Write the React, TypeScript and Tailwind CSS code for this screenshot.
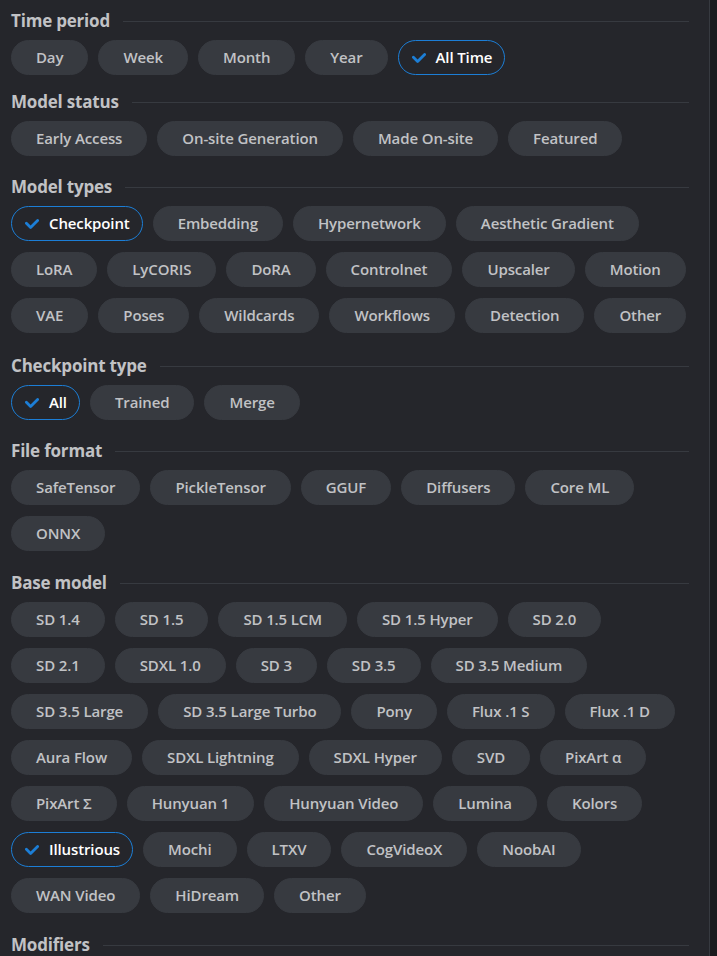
import React from "react";

type Opt = { label: string; checked?: boolean };

const sections: { title: string; options: Opt[]; mb: string }[] = [
  {
    title: "Time period",
    mb: "mb-[15px]",
    options: [
      { label: "Day" },
      { label: "Week" },
      { label: "Month" },
      { label: "Year" },
      { label: "All Time", checked: true },
    ],
  },
  {
    title: "Model status",
    mb: "mb-[19px]",
    options: [
      { label: "Early Access" },
      { label: "On-site Generation" },
      { label: "Made On-site" },
      { label: "Featured" },
    ],
  },
  {
    title: "Model types",
    mb: "mb-[21px]",
    options: [
      { label: "Checkpoint", checked: true },
      { label: "Embedding" },
      { label: "Hypernetwork" },
      { label: "Aesthetic Gradient" },
      { label: "LoRA" },
      { label: "LyCORIS" },
      { label: "DoRA" },
      { label: "Controlnet" },
      { label: "Upscaler" },
      { label: "Motion" },
      { label: "VAE" },
      { label: "Poses" },
      { label: "Wildcards" },
      { label: "Workflows" },
      { label: "Detection" },
      { label: "Other" },
    ],
  },
  {
    title: "Checkpoint type",
    mb: "mb-[19px]",
    options: [{ label: "All", checked: true }, { label: "Trained" }, { label: "Merge" }],
  },
  {
    title: "File format",
    mb: "mb-[20px]",
    options: [
      { label: "SafeTensor" },
      { label: "PickleTensor" },
      { label: "GGUF" },
      { label: "Diffusers" },
      { label: "Core ML" },
      { label: "ONNX" },
    ],
  },
  {
    title: "Base model",
    mb: "mb-[20px]",
    options: [
      { label: "SD 1.4" },
      { label: "SD 1.5" },
      { label: "SD 1.5 LCM" },
      { label: "SD 1.5 Hyper" },
      { label: "SD 2.0" },
      { label: "SD 2.1" },
      { label: "SDXL 1.0" },
      { label: "SD 3" },
      { label: "SD 3.5" },
      { label: "SD 3.5 Medium" },
      { label: "SD 3.5 Large" },
      { label: "SD 3.5 Large Turbo" },
      { label: "Pony" },
      { label: "Flux .1 S" },
      { label: "Flux .1 D" },
      { label: "Aura Flow" },
      { label: "SDXL Lightning" },
      { label: "SDXL Hyper" },
      { label: "SVD" },
      { label: "PixArt α" },
      { label: "PixArt Σ" },
      { label: "Hunyuan 1" },
      { label: "Hunyuan Video" },
      { label: "Lumina" },
      { label: "Kolors" },
      { label: "Illustrious", checked: true },
      { label: "Mochi" },
      { label: "LTXV" },
      { label: "CogVideoX" },
      { label: "NoobAI" },
      { label: "WAN Video" },
      { label: "HiDream" },
      { label: "Other" },
    ],
  },
];

function CheckIcon() {
  return (
    <svg width="14" height="10" viewBox="0 0 10 7" fill="#1c7ed6" className="shrink-0">
      <path d="M4 4.586L1.707 2.293A1 1 0 1 0 .293 3.707l3 3a.997.997 0 0 0 1.414 0l5-5A1 1 0 1 0 8.293.293L4 4.586z" />
    </svg>
  );
}

function Chip({ opt }: { opt: Opt }) {
  if (opt.checked) {
    return (
      <div className="flex h-[35px] items-center gap-[10px] rounded-full border border-[#1c7ed6] pl-[13px] pr-[12px] text-[15px] font-semibold tracking-[-0.12px] text-white">
        <CheckIcon />
        <span>{opt.label}</span>
      </div>
    );
  }
  return (
    <div className="flex h-[35px] items-center rounded-full border border-[#373a40] bg-[#373a40] px-[24px] text-[15px] font-semibold tracking-[-0.12px] text-[#c1c2c5]">
      {opt.label}
    </div>
  );
}

function Heading({ title }: { title: string }) {
  return (
    <div className="flex h-[24px] items-center gap-[13px]">
      <span className="text-[17px] font-bold leading-[24px] tracking-[-0.2px] text-[#c1c2c5]">{title}</span>
      <div className="h-px flex-1 bg-[#373a40]" />
    </div>
  );
}

export default function App() {
  return (
    <div
      className="flex h-[956px] w-full overflow-hidden bg-[#1a1b1e]"
      style={{ fontFamily: "'Open Sans', 'Noto Sans', sans-serif" }}
    >
      <div className="h-full w-[710px] shrink-0 border-r border-[#373a40] bg-[#25262b] pl-[11px] pr-[20px] pt-[9px]">
        {sections.map((s) => (
          <div key={s.title} className={s.mb}>
            <Heading title={s.title} />
            <div className="mt-[7px] flex flex-wrap gap-x-[10px] gap-y-[11px]">
              {s.options.map((o) => (
                <Chip key={o.label} opt={o} />
              ))}
            </div>
          </div>
        ))}
        <Heading title="Modifiers" />
      </div>
    </div>
  );
}
